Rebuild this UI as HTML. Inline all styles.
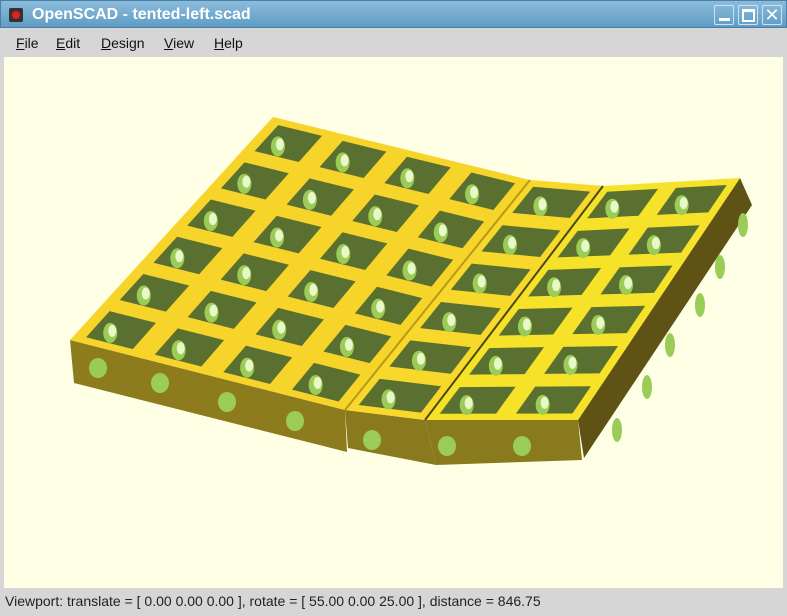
<!DOCTYPE html>
<html><head><meta charset="utf-8"><style>
*{margin:0;padding:0;box-sizing:border-box}
body{width:787px;height:616px;overflow:hidden;background:#d6d6d6;font-family:"Liberation Sans",sans-serif;position:relative}
#title{position:absolute;left:0;top:0;width:787px;height:28px;background:linear-gradient(#8cbcdc,#5f9cc4);border:1px solid #4a7fa6;color:#fff;font-weight:bold;font-size:16px}
#title .t{position:absolute;left:31px;top:5px}
#title .ic{position:absolute;left:8px;top:7px;width:14px;height:14px;background:#333;border-radius:2px}
#title .ic:after{content:"";position:absolute;left:3px;top:3px;width:8px;height:8px;border-radius:50%;background:#d22}
.wb{position:absolute;top:4px;width:20px;height:20px;border:1px solid #cfe3f0;border-radius:2px}
#menu{position:absolute;left:0;top:28px;width:787px;height:29px;font-size:14px;color:#111}
#menu span{position:absolute;top:7px}
#vp{position:absolute;left:4px;top:57px;width:779px;height:531px;background:#ffffe5}
#status{position:absolute;left:5px;top:593px;font-size:14px;color:#222}
svg{position:absolute;left:0;top:0}
</style></head><body>
<div id="title"><div class="ic"></div><div class="t">OpenSCAD - tented-left.scad</div>
<div class="wb" style="left:713px"><div style="position:absolute;left:4px;bottom:3px;width:11px;height:3px;background:#fff"></div></div>
<div class="wb" style="left:737px"><div style="position:absolute;left:3px;top:3px;width:13px;height:13px;border:2px solid #fff;border-top-width:3px"></div></div>
<div class="wb" style="left:761px;color:#fff;font-weight:normal;font-size:18px;text-align:center;line-height:18px">✕</div>
</div>
<div id="menu"><span style="left:16px"><u>F</u>ile</span><span style="left:56px"><u>E</u>dit</span><span style="left:101px"><u>D</u>esign</span><span style="left:164px"><u>V</u>iew</span><span style="left:214px"><u>H</u>elp</span></div>
<div id="vp"></div>
<svg width="787" height="616" id="s"></svg>
<div id="status">Viewport: translate = [ 0.00 0.00 0.00 ], rotate = [ 55.00 0.00 25.00 ], distance = 846.75</div>
<script>
var s=document.getElementById('s'),h='';
function P(pts,c){h+='<polygon points="'+pts.map(p=>p.join(',')).join(' ')+'" fill="'+c+'"/>';}
function L(a,b,t){return[a[0]+(b[0]-a[0])*t,a[1]+(b[1]-a[1])*t];}
function Q(A,B,C,D,u,v){return L(L(A,B,u),L(D,C,u),v);}
P([[70,340],[345,410],[347,452],[74,383]],'#8d7c1e');
P([[345,410],[425,420],[436,465],[348,448]],'#8a7a1e');
P([[425,420],[578,420],[582,460],[436,465]],'#8a7a1e');
P([[740,178],[752,205],[584,458],[578,420]],'#5e5214');
function blk(A,B,C,D,col,nc,nr,cellw,cellh){
 P([A,B,C,D],col);
 for(var i=0;i<nc;i++)for(var j=0;j<nr;j++){
  var u0=(i+(1-cellw)/2)/nc,u1=(i+(1+cellw)/2)/nc,v0=(j+(1-cellh)/2)/nr,v1=(j+(1+cellh)/2)/nr;
  var a=Q(A,B,C,D,u0,v0),b=Q(A,B,C,D,u1,v0),c=Q(A,B,C,D,u1,v1),d=Q(A,B,C,D,u0,v1);
  P([a,b,c,d],'#5a7030');
  var m=Q(A,B,C,D,(u0+u1)/2-0.1/nc,(v0+v1)/2+0.12/nr);
  h+='<ellipse cx="'+m[0]+'" cy="'+m[1]+'" rx="7" ry="10" fill="#9ccc58"/><ellipse cx="'+(m[0]+2)+'" cy="'+(m[1]-2)+'" rx="4" ry="6" fill="#e8f8c8"/>';
 }
}
blk([273,117],[530,180],[345,410],[70,340],'#f7d42a',4,6,0.68,0.7);
blk([530,180],[603,186],[425,420],[345,410],'#f8d82a',1,6,0.78,0.68);
blk([603,186],[740,178],[578,420],[425,420],'#f7e22a',2,6,0.74,0.68);
h+='<line x1="530" y1="180" x2="345" y2="410" stroke="#b89a18" stroke-width="2"/>';
h+='<line x1="603" y1="186" x2="425" y2="420" stroke="#4a4a10" stroke-width="2"/>';
[[98,368],[160,383],[227,402],[295,421],[372,440],[447,446],[522,446]].forEach(p=>{h+='<ellipse cx="'+p[0]+'" cy="'+p[1]+'" rx="9" ry="10" fill="#9ccc58"/>';});
[[743,225],[720,267],[700,305],[670,345],[647,387],[617,430]].forEach(p=>{h+='<ellipse cx="'+p[0]+'" cy="'+p[1]+'" rx="5" ry="12" fill="#9ccc58"/>';});
s.innerHTML=h;
</script>
</body></html>
